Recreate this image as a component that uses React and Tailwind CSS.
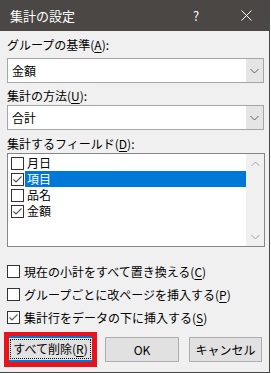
import React from "react";

const F = { fontFamily: '"Noto Sans CJK JP", "Noto Sans", sans-serif' };

function U({ children }) {
  return <span className="underline underline-offset-2">{children}</span>;
}

function Check({ checked }) {
  return (
    <div className="w-[13px] h-[13px] border border-[#333333] bg-white flex items-center justify-center shrink-0">
      {checked && (
        <svg width="11" height="11" viewBox="0 0 11 11">
          <path d="M1.5 5.5 L4 8 L9.5 2.5" fill="none" stroke="#555555" strokeWidth="1.1" />
        </svg>
      )}
    </div>
  );
}

function Chevron({ up, color = "#606060" }) {
  return (
    <svg width="9" height="6" viewBox="0 0 9 6">
      <path d={up ? "M0.5 5 L4.5 1 L8.5 5" : "M0.5 1 L4.5 5 L8.5 1"} fill="none" stroke={color} strokeWidth="1" />
    </svg>
  );
}

function Combo({ value }) {
  return (
    <div className="ml-[7px] w-[257px] h-[25px] border border-[#a6a6a6] bg-white flex">
      <div className="flex-1 flex items-center pl-[4px] text-[12px] leading-[16px] text-black">{value}</div>
      <div className="w-[17px] bg-[#e5e5e5] flex items-center justify-center">
        <Chevron />
      </div>
    </div>
  );
}

function Item({ label, checked, selected }) {
  return (
    <div className="h-[16px] flex items-center">
      <div className="w-[16px] flex items-center justify-center pl-[1px]">
        <Check checked={checked} />
      </div>
      <div
        className={
          "flex-1 h-[16px] flex items-center pl-[2px] text-[12px] leading-[16px] " +
          (selected ? "bg-[#0078d7] text-white" : "text-black")
        }
      >
        {label}
      </div>
    </div>
  );
}

function Row({ children, checked }) {
  return (
    <div className="h-[23px] flex items-center pl-[7px] gap-[4px] text-[12px] leading-[16px] text-black">
      <Check checked={checked} />
      <span>{children}</span>
    </div>
  );
}

export default function App() {
  return (
    <div className="w-[271px] h-[374px] bg-white" style={F}>
      <div className="w-[270px] h-[373px] bg-[#f0f0f0] border-r border-b border-[#4a4846] flex flex-col">
        <div className="h-[31px] bg-[#4a4745] flex items-center text-white shrink-0">
          <span className="pl-[10px] text-[13px] leading-[16px] flex-1">集計の設定</span>
          <span className="text-[13px] leading-[16px] w-[12px] mr-[36px]">?</span>
          <svg width="11" height="11" viewBox="0 0 11 11" className="mr-[17px]">
            <path d="M0.5 0.5 L10.5 10.5 M10.5 0.5 L0.5 10.5" stroke="#ffffff" strokeWidth="1" />
          </svg>
        </div>

        <div className="mt-[6px] pl-[7px] h-[16px] text-[12px] leading-[16px] text-black">
          グループの基準(<U>A</U>):
        </div>
        <div className="mt-[5px]">
          <Combo value="金額" />
        </div>

        <div className="mt-[5px] pl-[7px] h-[16px] text-[12px] leading-[16px] text-black">
          集計の方法(<U>U</U>):
        </div>
        <div className="mt-[1px]">
          <Combo value="合計" />
        </div>

        <div className="mt-[6px] pl-[7px] h-[16px] text-[12px] leading-[16px] text-black">
          集計するフィールド(<U>D</U>):
        </div>
        <div className="mt-[1px] ml-[7px] w-[258px] h-[94px] border border-[#828790] bg-white flex">
          <div className="flex-1 pt-[1px] pl-[1px]">
            <Item label="月日" />
            <Item label="項目" checked selected />
            <Item label="品名" />
            <Item label="金額" checked />
          </div>
          <div className="w-[18px] bg-[#f0f0f0] flex flex-col items-center justify-between pt-[7px] pb-[6px]">
            <Chevron up color="#a3a3a3" />
            <Chevron color="#a3a3a3" />
          </div>
        </div>

        <div className="mt-[13px]">
          <Row>現在の小計をすべて置き換える(<U>C</U>)</Row>
          <Row>グループごとに改ページを挿入する(<U>P</U>)</Row>
          <Row checked>集計行をデータの下に挿入する(<U>S</U>)</Row>
        </div>

        <div className="mt-[3px] flex items-center">
          <div className="ml-[4px] w-[93px] h-[35px] border-x-[5px] border-t-[4px] border-b-[5px] border-[#e8141c]">
            <div className="h-full border-y-2 border-[#0078d7] bg-[#e1e1e1] p-[1px]">
              <div className="h-full border border-dotted border-black flex items-center justify-center text-[12px] leading-[16px] text-black">
                すべて削除(<U>R</U>)
              </div>
            </div>
          </div>
          <div className="ml-[8px] w-[74px] h-[25px] border border-[#adadad] bg-[#e1e1e1] flex items-center justify-center text-[12px] leading-[16px] text-black">
            OK
          </div>
          <div className="ml-[10px] w-[73px] h-[25px] border border-[#adadad] bg-[#e1e1e1] flex items-center justify-center text-[12px] leading-[16px] text-black">
            キャンセル
          </div>
        </div>
      </div>
    </div>
  );
}
